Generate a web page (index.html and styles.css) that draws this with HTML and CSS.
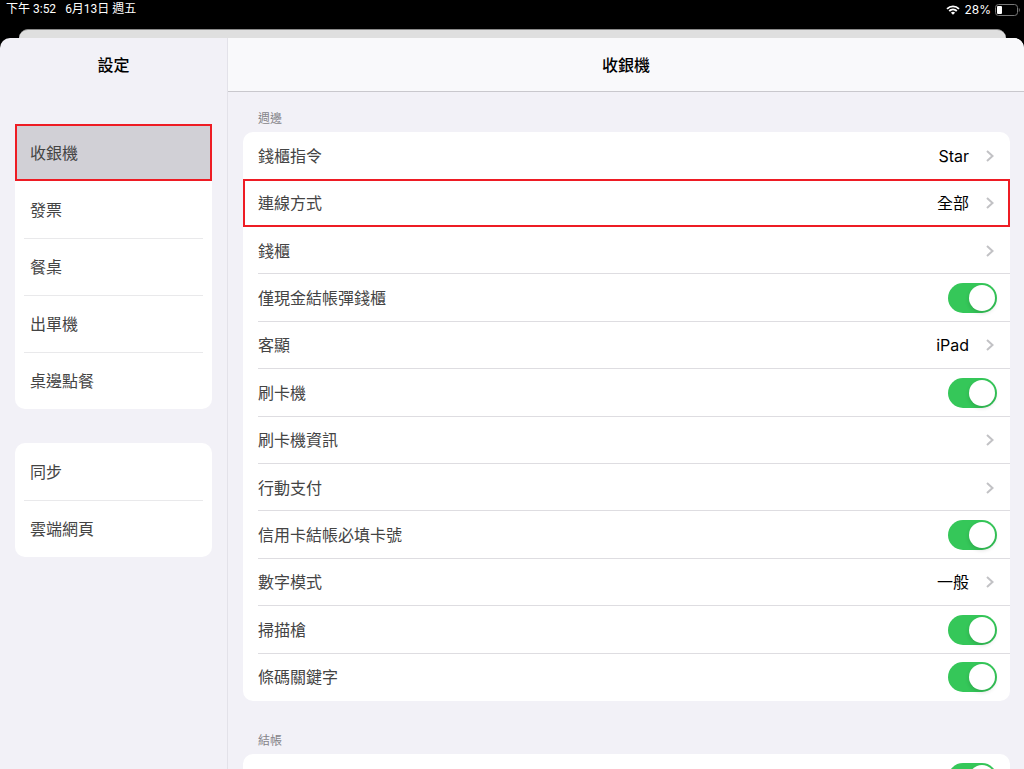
FILE: index.html
```html
<!DOCTYPE html>
<html lang="zh-Hant">
<head>
<meta charset="utf-8">
<meta name="viewport" content="width=device-width, initial-scale=1">
<title>設定</title>
<link rel="stylesheet" href="styles.css">
</head>
<body>
<header class="status">
  <div class="status-group status-left"><span>下午 3:52</span><span>6月13日 週五</span></div>
  <div class="status-group status-right">
    <svg class="wifi" viewBox="0 0 14 10" aria-hidden="true"><path d="M1 3.8a8.6 8.6 0 0 1 12 0M3.2 6a5.5 5.5 0 0 1 7.6 0" fill="none" stroke="#fff" stroke-width="1.8"/><path d="M7 9.8L4.9 7.7a3 3 0 0 1 4.2 0z" fill="#fff"/></svg>
    <span>28%</span>
    <svg class="battery" viewBox="0 0 25 12" aria-hidden="true"><rect x=".5" y=".5" width="22" height="11" rx="3" fill="none" stroke="#777"/><rect x="2" y="2" width="5" height="8" rx="1" fill="#fff"/><path d="M23.8 4v4c1.3-.6 1.3-3.4 0-4z" fill="#777"/></svg>
  </div>
</header>
<div class="backdrop"></div>
<div class="sheet">
  <nav class="sidebar" aria-label="設定">
    <h1 class="title">設定</h1>
    <ul class="menu">
      <li><button class="menu-item selected marked" aria-current="page">收銀機</button></li>
      <li><button class="menu-item">發票</button></li>
      <li><button class="menu-item">餐桌</button></li>
      <li><button class="menu-item">出單機</button></li>
      <li><button class="menu-item">桌邊點餐</button></li>
    </ul>
    <ul class="menu">
      <li><button class="menu-item">同步</button></li>
      <li><button class="menu-item">雲端網頁</button></li>
    </ul>
  </nav>
  <main class="detail">
    <div class="detail-bar"><h2 class="title">收銀機</h2></div>
    <section class="section">
      <h3 class="caption">週邊</h3>
      <div class="card peripherals">
        <button class="row"><span class="label">錢櫃指令</span><span class="value">Star</span><svg class="chevron" viewBox="0 0 8 14" aria-hidden="true"><path d="M1 2l5.5 5L1 12"/></svg></button>
        <button class="row marked"><span class="label">連線方式</span><span class="value">全部</span><svg class="chevron" viewBox="0 0 8 14" aria-hidden="true"><path d="M1 2l5.5 5L1 12"/></svg></button>
        <button class="row"><span class="label">錢櫃</span><svg class="chevron" viewBox="0 0 8 14" aria-hidden="true"><path d="M1 2l5.5 5L1 12"/></svg></button>
        <label class="row"><span class="label">僅現金結帳彈錢櫃</span><input class="switch" type="checkbox" role="switch" checked></label>
        <button class="row"><span class="label">客顯</span><span class="value">iPad</span><svg class="chevron" viewBox="0 0 8 14" aria-hidden="true"><path d="M1 2l5.5 5L1 12"/></svg></button>
        <label class="row"><span class="label">刷卡機</span><input class="switch" type="checkbox" role="switch" checked></label>
        <button class="row"><span class="label">刷卡機資訊</span><svg class="chevron" viewBox="0 0 8 14" aria-hidden="true"><path d="M1 2l5.5 5L1 12"/></svg></button>
        <button class="row"><span class="label">行動支付</span><svg class="chevron" viewBox="0 0 8 14" aria-hidden="true"><path d="M1 2l5.5 5L1 12"/></svg></button>
        <label class="row"><span class="label">信用卡結帳必填卡號</span><input class="switch" type="checkbox" role="switch" checked></label>
        <button class="row"><span class="label">數字模式</span><span class="value">一般</span><svg class="chevron" viewBox="0 0 8 14" aria-hidden="true"><path d="M1 2l5.5 5L1 12"/></svg></button>
        <label class="row"><span class="label">掃描槍</span><input class="switch" type="checkbox" role="switch" checked></label>
        <label class="row"><span class="label">條碼關鍵字</span><input class="switch" type="checkbox" role="switch" checked></label>
      </div>
    </section>
    <section class="section">
      <h3 class="caption">結帳</h3>
      <div class="card">
        <label class="row"><input class="switch" type="checkbox" role="switch" aria-label="結帳" checked></label>
      </div>
    </section>
  </main>
</div>
</body>
</html>
```
FILE: styles.css
```css
* {
  box-sizing: border-box;
}

body {
  margin: 0;
  height: 100vh;
  display: flex;
  flex-direction: column;
  overflow: hidden;
  background: #000;
  color: #000;
  font: 16px/24px Inter, "Noto Sans CJK TC", sans-serif;
}

h1, h2, h3, ul {
  margin: 0;
  padding: 0;
  list-style: none;
}

button {
  border: 0;
  background: none;
  font: inherit;
  color: inherit;
  text-align: left;
}

.status {
  flex: none;
  display: flex;
  justify-content: space-between;
  height: 29px;
  padding: 0 4px 0 6px;
  color: #fff;
  font-size: 12px;
  line-height: 19px;
}

.status-group {
  display: flex;
  align-items: center;
  height: 19px;
}

.status-left {
  gap: 9px;
  font-family: Roboto, "Noto Sans CJK TC", sans-serif;
}

.status-right {
  gap: 4px;
}

.wifi {
  width: 14px;
  height: 10px;
}

.battery {
  width: 25px;
  height: 12px;
}

.backdrop {
  flex: none;
  height: 9px;
  margin: 0 18px 0 19px;
  border-top: 1px solid #8a8a8a;
  border-radius: 9px 9px 0 0;
  background: #dfdfdf;
}

.sheet {
  flex: 1;
  min-height: 0;
  display: flex;
  overflow: hidden;
  border-radius: 10px 10px 0 0;
  background: #f2f1f7;
}

.sidebar {
  flex: none;
  width: 228px;
  padding: 0 15px;
  border-right: 1px solid #e3e2e9;
}

.title {
  height: 53px;
  font-size: 16px;
  line-height: 54px;
  font-weight: 500;
  text-align: center;
}

.menu {
  margin-bottom: 34px;
  border-radius: 10px;
  background: #fff;
}

.title + .menu {
  margin-top: 33px;
}

.menu li {
  padding: 0 9px;
}

.menu li + li .menu-item {
  border-top: 1px solid #e9e9eb;
}

.menu-item {
  display: block;
  width: 100%;
  height: 57px;
  padding: 0 6px;
  color: #444;
}

.menu li:has(.selected) {
  padding: 0;
}

.menu .selected {
  padding: 0 15px;
  background: #d1d0d6;
}

.menu li:has(.selected) + li .menu-item {
  border-color: transparent;
}

.marked {
  outline: 2px solid #ee1c24;
  outline-offset: -2px;
}

.detail {
  flex: 1;
  min-width: 0;
}

.detail-bar {
  border-bottom: 1px solid #c9c8cd;
  background: #f9f9fb;
}

.section {
  padding: 15px 14px 0 15px;
}

.section + .section {
  padding-top: 28px;
}

.caption {
  height: 25px;
  padding: 0 15px;
  color: #858489;
  font-size: 12px;
  line-height: 24px;
  font-weight: 400;
}

.card {
  border-radius: 10px;
  background: #fff;
}

.peripherals {
  display: grid;
  grid-auto-rows: 1fr;
  height: 569px;
}

.row {
  display: flex;
  align-items: center;
  width: 100%;
  min-height: 47px;
  padding: 0 13px 0 15px;
  background: linear-gradient(#dedde1, #dedde1) 15px 100% / 100% 1px no-repeat;
}

.row:has(+ .marked),
.row.marked,
.row:last-child {
  background: none;
}

.label {
  color: #444;
}

.value {
  margin-left: auto;
}

.chevron {
  flex: none;
  width: 8px;
  height: 14px;
  margin: 0 3px 0 auto;
  fill: none;
  stroke: #c2c2c5;
  stroke-width: 2;
}

.value + .chevron {
  margin-left: 17px;
}

.switch {
  appearance: none;
  flex: none;
  display: flex;
  align-items: center;
  width: 49px;
  height: 30px;
  margin: 0 0 0 auto;
  padding: 0 2px;
  border-radius: 15px;
  background: #e9e9eb;
}

.switch:checked {
  justify-content: flex-end;
  background: #35c759;
}

.switch::before {
  content: "";
  width: 26px;
  height: 26px;
  border-radius: 50%;
  background: #fff;
  box-shadow: 0 2px 4px rgba(0, 0, 0, 0.15);
}
```
